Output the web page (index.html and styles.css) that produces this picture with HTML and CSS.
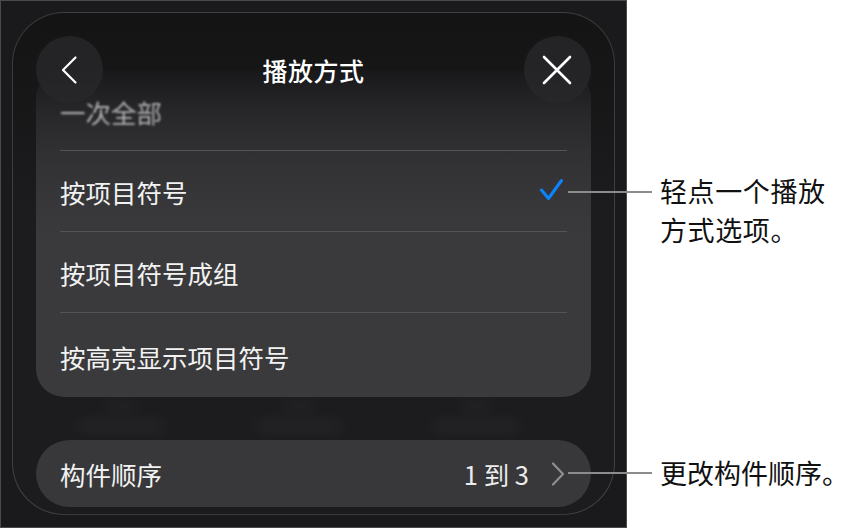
FILE: index.html
```html
<!DOCTYPE html>
<html lang="zh-CN">
<head>
<meta charset="utf-8">
<link rel="stylesheet" href="styles.css">
</head>
<body>
<div class="page">
  <div class="device">
    <div class="sheet">
      <div class="header">
        <div class="round-btn">
          <svg width="30" height="30" viewBox="0 0 30 30"><path d="M20.5 2.5 L8 15 L20.5 27.5" fill="none" stroke="#fff" stroke-width="2.2" stroke-linecap="round" stroke-linejoin="round"/></svg>
        </div>
        <div class="title">播放方式</div>
        <div class="round-btn">
          <svg width="30" height="30" viewBox="0 0 30 30"><path d="M2 2 L28 28 M28 2 L2 28" fill="none" stroke="#fff" stroke-width="2.6" stroke-linecap="round"/></svg>
        </div>
      </div>
      <div class="card">
        <div class="row first"><span class="blurred">一次全部</span></div>
        <div class="row"><span>按项目符号</span>
          <svg class="check" width="26" height="24" viewBox="0 0 26 24"><path d="M2.5 12 L9.5 20.5 L22.5 2.5" fill="none" stroke="#0a84ff" stroke-width="3" stroke-linecap="round" stroke-linejoin="round"/></svg>
        </div>
        <div class="row"><span>按项目符号成组</span></div>
        <div class="row last"><span>按高亮显示项目符号</span></div>
      </div>
      <div class="ghosts">
        <div class="ghost-col"><i class="g s"></i><i class="g l"></i></div>
        <div class="ghost-col"><i class="g s"></i><i class="g l"></i></div>
        <div class="ghost-col"><i class="g s"></i><i class="g l"></i></div>
      </div>
      <div class="pill">
        <span>构件顺序</span>
        <span class="value">1 到 3</span>
        <svg class="chev" width="14" height="24" viewBox="0 0 14 24"><path d="M2 1.5 L12 12 L2 22.5" fill="none" stroke="#8e8e93" stroke-width="2.2" stroke-linecap="round" stroke-linejoin="round"/></svg>
      </div>
    </div>
  </div>
  <div class="callout c1"><i class="leader"></i><div class="note"><div class="line">轻点一个播放</div><div class="line">方式选项。</div></div></div>
  <div class="callout c2"><i class="leader"></i><div class="note"><div class="line">更改构件顺序。</div></div></div>
</div>
</body>
</html>
```
FILE: styles.css
```css
html, body { margin: 0; padding: 0; background: #fff; }
body { font-family: "Noto Sans CJK SC", "Noto Sans", sans-serif; }
.page { position: relative; width: 851px; height: 529px; }
.device {
  width: 627px; height: 528px; box-sizing: border-box;
  background: #1a1a1c; border: 1px solid #4a4a4c;
  padding: 11px 11px 12px 11px;
}
.sheet {
  height: 100%; box-sizing: border-box;
  border: 1px solid rgba(255,255,255,0.16);
  border-radius: 52px;
  background: linear-gradient(#141415 0px, #161617 60px, #1c1c1e 200px);
  padding: 23px 23px 7px 23px;
  display: flex; flex-direction: column;
}
.header {
  position: relative; z-index: 2;
  display: flex; align-items: center; justify-content: space-between;
  height: 67px;
}
.round-btn {
  width: 67px; height: 67px; border-radius: 50%;
  background: rgba(40,40,42,0.8);
  display: flex; align-items: center; justify-content: center;
}
.title { color: #fff; font-size: 25px; font-weight: 500; letter-spacing: 0.5px; }
.card {
  margin-top: -33px;
  border-radius: 28px;
  background: linear-gradient(#18181a 0px, #1f1f21 18px, #28282a 45px, #313133 85px, #37373a 130px, #3a3a3c 170px);
  display: flex; flex-direction: column;
  padding: 0 24px;
  height: 327px; box-sizing: border-box;
}
.row {
  height: 81px; box-sizing: border-box;
  display: flex; align-items: center; justify-content: space-between;
  border-bottom: 1px solid #545456;
  color: #f2f2f2; font-size: 25.5px;
}
.row.first { height: 81px; padding-top: 3px; }
.row.last { border-bottom: none; flex: 1; padding-top: 3px; }
.blurred { color: #c8c8ca; filter: blur(0.9px); opacity: 0.85; }
.check { margin-right: 2px; margin-top: -2px; }
.ghosts {
  height: 43px; display: flex; justify-content: space-between;
  padding: 0 60px 0 30px;
}
.ghost-col { display: flex; flex-direction: column; align-items: center; padding-top: 4px; width: 110px; }
.g { display: block; border-radius: 10px; background: rgba(255,255,255,0.035); filter: blur(7px); }
.g.s { width: 36px; height: 10px; }
.g.l { width: 90px; height: 14px; margin-top: 8px; }
.pill {
  height: 67px; border-radius: 34px; background: #38383a;
  display: flex; align-items: center;
  padding: 0 26px 0 24px;
  color: #f2f2f2; font-size: 25.5px;
}
.pill .value { margin-left: auto; margin-right: 22px; color: #ececec; }
.chev { margin-top: 1px; }
.callout { position: absolute; display: flex; align-items: flex-start; }
.c1 { left: 568px; top: 171px; }
.c2 { left: 568px; top: 453px; }
.leader { display: block; width: 84px; height: 2px; background: #8c8c8c; margin-top: 20px; }
.c2 .leader { margin-top: 19px; }
.note { margin-left: 8px; color: #111; white-space: nowrap; font-size: 27px; }
.c1 .note { letter-spacing: 0.6px; }
.line { height: 39.4px; line-height: 39.4px; }
```
